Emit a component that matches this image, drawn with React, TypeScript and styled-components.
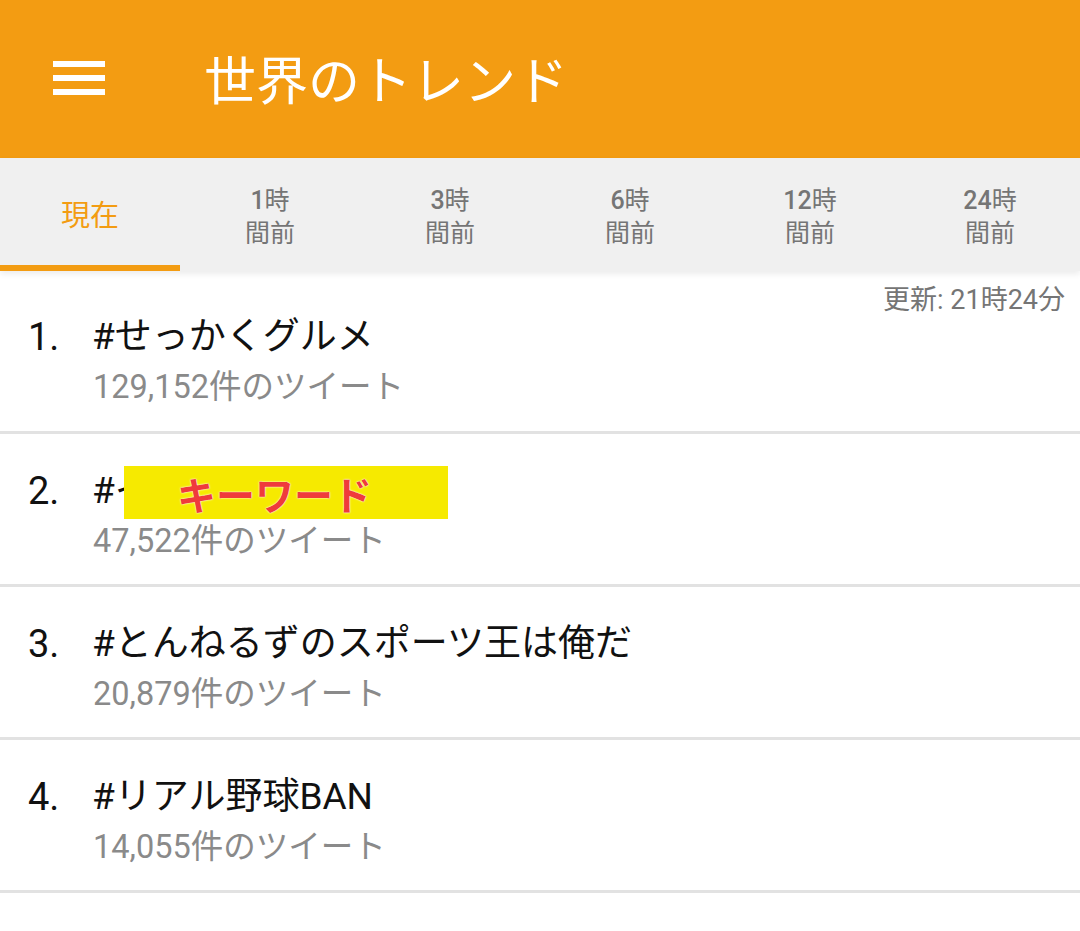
import React from "react";
import styled, { createGlobalStyle } from "styled-components";

const GlobalStyle = createGlobalStyle`
  html, body {
    margin: 0;
    padding: 0;
    background: #ffffff;
  }
  body {
    font-family: Roboto, "Noto Sans CJK JP", sans-serif;
  }
`;

const ORANGE = "#f39c12";

const Page = styled.div`
  width: 1080px;
  height: 931px;
  overflow: hidden;
  background: #fff;
`;

const AppBar = styled.header`
  height: 158px;
  background: ${ORANGE};
  display: flex;
  align-items: center;
  padding-left: 53px;
  box-sizing: border-box;
`;

const MenuButton = styled.div`
  width: 52px;
  display: flex;
  flex-direction: column;
  gap: 8px;
  margin-top: -2px;
`;

const MenuBar = styled.span`
  display: block;
  height: 6px;
  background: #fff;
`;

const Title = styled.h1`
  margin: 0 0 0 99px;
  font-family: "Noto Sans CJK JP", sans-serif;
  font-weight: 400;
  font-size: 52px;
  color: #fff;
  line-height: 1;
  margin-top: -2px;
`;

const TabBar = styled.nav`
  display: grid;
  grid-template-columns: repeat(6, 1fr);
  height: 113px;
  background: #f0f0f0;
  box-shadow: 0 3px 6px rgba(0, 0, 0, 0.08);
  position: relative;
  z-index: 1;
`;

const Tab = styled.div<{ $active?: boolean }>`
  display: flex;
  flex-direction: column;
  align-items: center;
  justify-content: center;
  color: ${(p) => (p.$active ? ORANGE : "#757575")};
  font-family: Roboto, "Noto Sans CJK JP", sans-serif;
  font-weight: 400;
  font-size: ${(p) => (p.$active ? "29px" : "25px")};
  line-height: 33px;
  border-bottom: 6px solid ${(p) => (p.$active ? ORANGE : "transparent")};
  padding-top: 10px;
`;

const TabLine = styled.span`
  display: block;
`;

const Num = styled.span`
  font-weight: 500;
`;

const List = styled.main`
  display: flex;
  flex-direction: column;
`;

const Updated = styled.div`
  text-align: right;
  padding: 16px 15px 0 0;
  height: 26px;
  line-height: 26px;
  font-size: 27px;
  color: #757575;
  font-family: Roboto, "Noto Sans CJK JP", sans-serif;
`;

const Row = styled.div<{ $first?: boolean }>`
  display: grid;
  grid-template-columns: 64px 1fr;
  padding: ${(p) => (p.$first ? "0" : "33px")} 0 ${(p) => (p.$first ? "26px" : "25px")} 28px;
  border-bottom: 3px solid #e2e2e2;
  position: relative;
`;

const Rank = styled.div`
  font-size: 38px;
  line-height: 48px;
  color: #111;
  font-family: Roboto, "Noto Sans CJK JP", sans-serif;
`;

const Body = styled.div`
  display: flex;
  flex-direction: column;
`;

const Tag = styled.div`
  font-size: 37px;
  line-height: 48px;
  color: #111;
  font-family: Roboto, "Noto Sans CJK JP", sans-serif;
  white-space: nowrap;
`;

const Count = styled.div`
  font-size: 32.5px;
  line-height: 44px;
  margin-top: 4px;
  margin-bottom: -4px;
  color: #8a8a8a;
  font-family: Roboto, "Noto Sans CJK JP", sans-serif;
  margin-left: 1px;
`;

const KeywordMask = styled.div`
  position: absolute;
  left: 124px;
  top: 32px;
  width: 324px;
  height: 53px;
  background: #f6ea00;
  box-sizing: border-box;
  padding-left: 53px;
  display: flex;
  align-items: center;
  font-family: "Noto Sans CJK JP", sans-serif;
  font-weight: 700;
  font-size: 39px;
  color: #ef3b3b;
  text-shadow: 0 0 2px #fff, 0 0 1px #fff;
`;

const tabs = [
  { num: "", rest: "現在", active: true },
  { num: "1", rest: "時" },
  { num: "3", rest: "時" },
  { num: "6", rest: "時" },
  { num: "12", rest: "時" },
  { num: "24", rest: "時" },
];

const trends = [
  { tag: "#せっかくグルメ", count: "129,152件のツイート" },
  { tag: "#イ", count: "47,522件のツイート", masked: true },
  { tag: "#とんねるずのスポーツ王は俺だ", count: "20,879件のツイート" },
  { tag: "#リアル野球BAN", count: "14,055件のツイート" },
];

export default function App() {
  return (
    <Page>
      <GlobalStyle />
      <AppBar>
        <MenuButton>
          <MenuBar />
          <MenuBar />
          <MenuBar />
        </MenuButton>
        <Title>世界のトレンド</Title>
      </AppBar>
      <TabBar>
        {tabs.map((t, i) => (
          <Tab key={i} $active={t.active}>
            <TabLine>
              {t.num && <Num>{t.num}</Num>}
              {t.rest}
            </TabLine>
            {!t.active && <TabLine>間前</TabLine>}
          </Tab>
        ))}
      </TabBar>
      <List>
        <Updated>更新: 21時24分</Updated>
        {trends.map((t, i) => (
          <Row key={i} $first={i === 0}>
            <Rank>{i + 1}.</Rank>
            <Body>
              <Tag>{t.tag}</Tag>
              <Count>{t.count}</Count>
            </Body>
            {t.masked && <KeywordMask>キーワード</KeywordMask>}
          </Row>
        ))}
      </List>
    </Page>
  );
}
